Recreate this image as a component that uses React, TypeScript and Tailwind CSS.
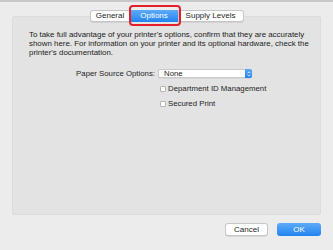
export default function App() {
  const font = { fontFamily: '"Liberation Sans", Arial, sans-serif' };
  return (
    <div className="w-[333px] h-[250px] bg-[#ececec] overflow-hidden text-[#1e1e1e]" style={font}>
      <div className="h-[2px] bg-[#c8c8c8]" />
      <div className="px-[12px] pt-[8px] pr-[12px]">
        {/* tab bar */}
        <div className="relative z-10 flex justify-center">
          <div className="relative flex h-[12px] text-[8px] leading-[12px]">
            <div className="w-[41px] bg-white border border-[#c6c6c6] rounded-l-[3px] text-center leading-[10px] shadow-[0_0.5px_0_rgba(0,0,0,0.15)]">General</div>
            <div className="w-[47px] bg-gradient-to-b from-[#5cabf8] to-[#1f83f2] text-white text-center">Options</div>
            <div className="w-[66px] bg-white border border-[#c6c6c6] rounded-r-[3px] text-center leading-[10px] shadow-[0_0.5px_0_rgba(0,0,0,0.15)]">Supply Levels</div>
            <div className="absolute left-[39px] top-[-5px] w-[52px] h-[21px] border-2 border-[#e3202a] rounded-[4px]" />
          </div>
        </div>
        {/* panel */}
        <div className="-mt-[6px] h-[199px] bg-[#e3e3e3] border border-[#dcdcdc] rounded-[2px] pt-[13px] pl-[16px] pr-[8px]">
          <p className="text-[7.9px] leading-[9px] text-[#222]">
            To take full advantage of your printer's options, confirm that they are accurately shown here. For information on your printer and its optional hardware, check the printer's documentation.
          </p>
          <div className="mt-[11px] flex items-center">
            <div className="w-[128px] text-right pr-[2px] text-[7.8px]">Paper Source Options:</div>
            <div className="ml-[1px] w-[94px] h-[9px] bg-white border border-[#c9c9c9] rounded-[2px] flex items-center justify-between shadow-[0_0.5px_0_rgba(0,0,0,0.1)]">
              <span className="pl-[5px] text-[7.8px] leading-[9px]">None</span>
              <span className="w-[7px] h-[9px] -mr-[1px] rounded-r-[2px] bg-gradient-to-b from-[#5aa9f8] to-[#1e82f1] flex flex-col items-center justify-center">
                <svg width="4" height="6" viewBox="0 0 4 6">
                  <path d="M0.5 2.3 L2 0.8 L3.5 2.3 M0.5 3.7 L2 5.2 L3.5 3.7" stroke="white" strokeWidth="0.8" fill="none" />
                </svg>
              </span>
            </div>
          </div>
          <div className="ml-[131px] mt-[5px] flex flex-col gap-[6px] text-[7.8px]">
            <label className="flex items-center gap-[2px] h-[9px]">
              <span className="w-[6px] h-[6px] bg-white border border-[#b5b5b5] rounded-[1px]" />
              <span>Department ID Management</span>
            </label>
            <label className="flex items-center gap-[2px] h-[9px]">
              <span className="w-[6px] h-[6px] bg-white border border-[#b5b5b5] rounded-[1px]" />
              <span>Secured Print</span>
            </label>
          </div>
        </div>
        {/* buttons */}
        <div className="mt-[8px] flex justify-end gap-[9px] text-[8px]">
          <button className="w-[43px] h-[13px] bg-white border border-[#c6c6c6] rounded-[3px] leading-[11px] shadow-[0_0.5px_0_rgba(0,0,0,0.15)]">Cancel</button>
          <button className="w-[44px] h-[13px] rounded-[3px] bg-gradient-to-b from-[#5cabf8] to-[#1f83f2] text-white leading-[13px]">OK</button>
        </div>
      </div>
    </div>
  );
}
